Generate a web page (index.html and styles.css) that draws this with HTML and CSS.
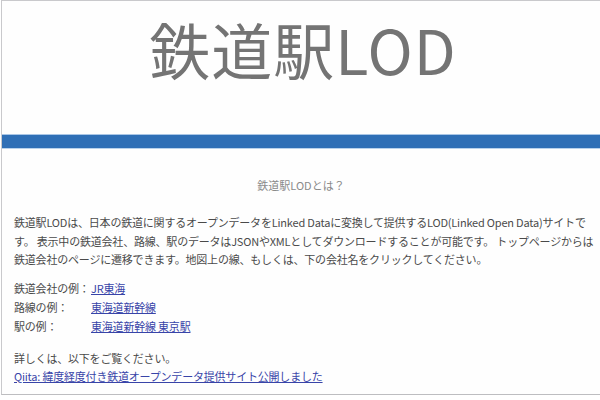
FILE: index.html
```html
<!DOCTYPE html>
<html lang="ja">
<head>
<meta charset="utf-8">
<title>鉄道駅LOD</title>
<link rel="stylesheet" href="styles.css">
</head>
<body>
<div class="frame">
  <header class="hero">
    <h1 class="title">鉄道駅LOD</h1>
  </header>
  <div class="bar"></div>
  <main class="content">
    <h2 class="about">鉄道駅LODとは？</h2>
    <p class="intro">鉄道駅LODは、日本の鉄道に関するオープンデータをLinked Dataに変換して提供するLOD(Linked Open Data)サイトで<br>す。 表示中の鉄道会社、路線、駅のデータはJSONやXMLとしてダウンロードすることが可能です。 トップページからは<br>鉄道会社のページに遷移できます。地図上の線、もしくは、下の会社名をクリックしてください。</p>
    <dl class="examples">
      <dt>鉄道会社の例：</dt><dd><a href="#">JR東海</a></dd>
      <dt>路線の例：</dt><dd><a href="#">東海道新幹線</a></dd>
      <dt>駅の例：</dt><dd><a href="#">東海道新幹線 東京駅</a></dd>
    </dl>
    <p class="more">詳しくは、以下をご覧ください。<br><a href="#">Qiita: 緯度経度付き鉄道オープンデータ提供サイト公開しました</a></p>
  </main>
</div>
</body>
</html>
```

FILE: styles.css
```css
html, body {
  margin: 0;
  padding: 0;
  background: #fff;
}
body {
  font-family: "Noto Sans CJK JP", "Noto Sans", sans-serif;
  color: #4a4a4a;
}
.frame {
  margin-left: 1px;
  height: 393px;
  border-top: 1px solid #c9c9cc;
  border-left: 1px solid #c9c9cc;
  border-bottom: 1px solid #bdbdc0;
  background: #fefefe;
}
.hero {
  height: 133px;
  display: flex;
  justify-content: center;
}
.title {
  margin: 8px 0 0 4px;
  font-weight: 400;
  font-size: 61px;
  line-height: 80px;
  letter-spacing: 1px;
  color: #747474;
}
.bar {
  height: 13px;
  background: #2f6fb6;
  border-top: 1px solid #a9c6e6;
  border-bottom: 1px solid #b9d2ec;
}
.content {
  padding: 0 12px;
}
.about {
  margin: 28px 0 0 0;
  text-align: center;
  font-weight: 400;
  font-size: 11px;
  line-height: 16px;
  color: #8a8a8a;
}
.intro {
  margin: 20px 0 0 0;
  font-size: 11px;
  line-height: 18.5px;
  white-space: nowrap;
  letter-spacing: -0.2px;
}
.examples {
  margin: 10px 0 0 0;
  display: grid;
  grid-template-columns: 77px auto;
  font-size: 11px;
  line-height: 19px;
  letter-spacing: -0.2px;
  white-space: nowrap;
}
.examples dt, .examples dd {
  margin: 0;
}
a {
  color: #3844a8;
}
.more {
  margin: 13px 0 0 0;
  font-size: 11px;
  line-height: 18px;
  letter-spacing: -0.2px;
}
```
